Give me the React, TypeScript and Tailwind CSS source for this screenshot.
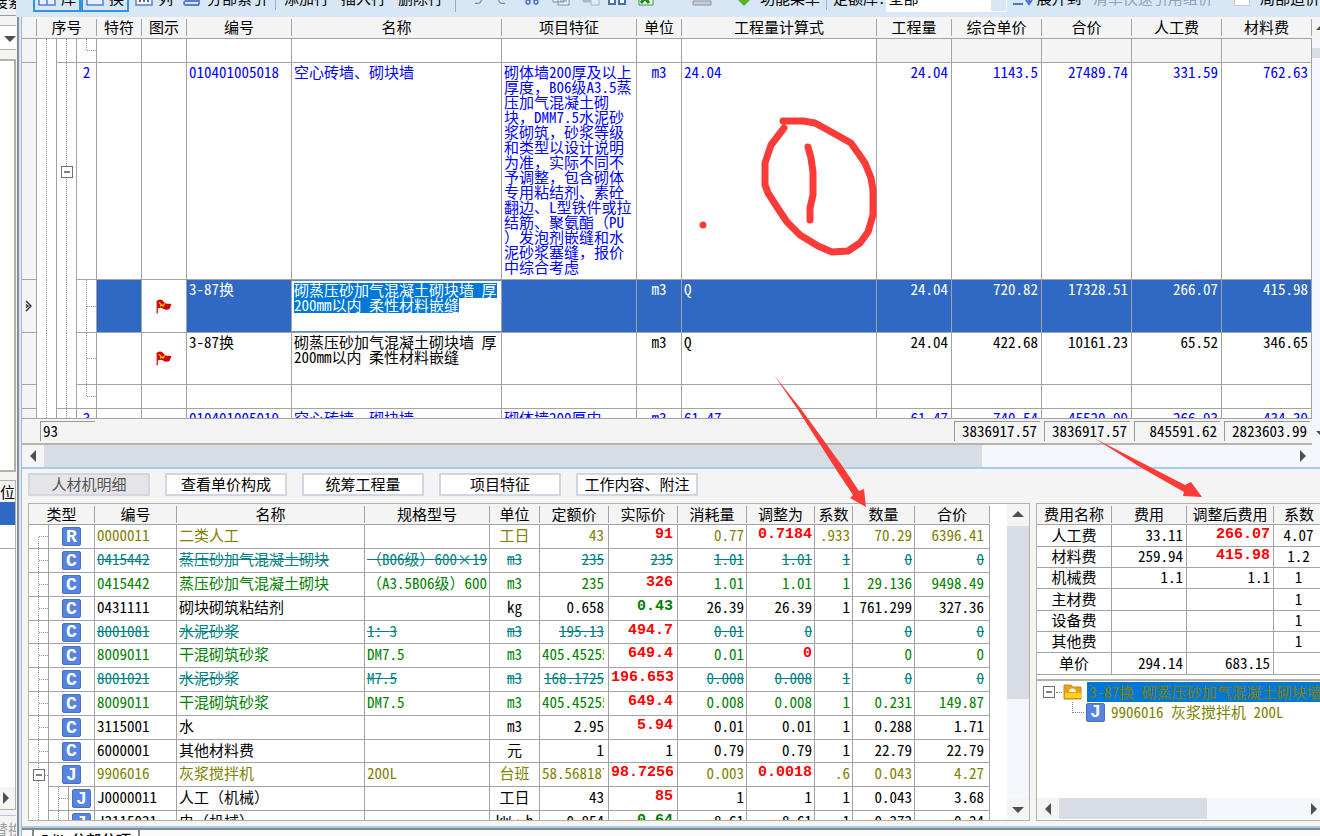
import type { ReactNode } from "react";
import clsx from "clsx";
import { Redo2, Scissors, Undo2 } from "lucide-react";

const DOTS_V =
  "[background-image:repeating-linear-gradient(#909090_0_1px,#fff_1px_2px)] [background-size:1px_100%] [background-position:50%_0] bg-no-repeat";
const DOTS_BRANCH =
  "[background-image:repeating-linear-gradient(#909090_0_1px,#fff_1px_2px),repeating-linear-gradient(90deg,#909090_0_1px,#fff_1px_2px)] [background-size:1px_100%,9px_1px] [background-position:50%_0,100%_50%] bg-no-repeat";
const DOTS_FIRST =
  "[background-image:repeating-linear-gradient(#909090_0_1px,#fff_1px_2px),repeating-linear-gradient(90deg,#909090_0_1px,#fff_1px_2px)] [background-size:1px_50%,9px_1px] [background-position:50%_100%,100%_50%] bg-no-repeat";
const DOTS_LAST =
  "[background-image:repeating-linear-gradient(#909090_0_1px,#fff_1px_2px),repeating-linear-gradient(90deg,#909090_0_1px,#fff_1px_2px)] [background-size:1px_50%,9px_1px] [background-position:50%_0,100%_50%] bg-no-repeat";

const LINE = "border-[#a3a3a3]";
const CHANGED = "font-['Liberation_Mono',monospace] text-[15px] font-bold";

type Tone = "olive" | "teal" | "green" | "black";

const TONES: Record<Tone, string> = {
  olive: "text-[#808000]",
  teal: "text-[#008080] line-through",
  green: "text-[#008000]",
  black: "text-black",
};

type Resource = {
  kind: "R" | "C" | "J";
  tone: Tone;
  child?: boolean;
  code: string;
  name: string;
  spec?: string;
  unit: string;
  base: string;
  actual: string;
  actualTone?: "red" | "green";
  usage: string;
  adjusted: string;
  adjustedTone?: "red";
  factor?: string;
  qty: string;
  total: string;
};

const RESOURCES: Resource[] = [
  { kind: "R", tone: "olive", code: "0000011", name: "二类人工", unit: "工日", base: "43", actual: "91", actualTone: "red", usage: "0.77", adjusted: "0.7184", adjustedTone: "red", factor: ".933", qty: "70.29", total: "6396.41" },
  { kind: "C", tone: "teal", code: "0415442", name: "蒸压砂加气混凝土砌块", spec: "（B06级）600×19", unit: "m3", base: "235", actual: "235", usage: "1.01", adjusted: "1.01", factor: "1", qty: "0", total: "0" },
  { kind: "C", tone: "green", code: "0415442", name: "蒸压砂加气混凝土砌块", spec: "（A3.5B06级）600", unit: "m3", base: "235", actual: "326", actualTone: "red", usage: "1.01", adjusted: "1.01", factor: "1", qty: "29.136", total: "9498.49" },
  { kind: "C", tone: "black", code: "0431111", name: "砌块砌筑粘结剂", unit: "kg", base: "0.658", actual: "0.43", actualTone: "green", usage: "26.39", adjusted: "26.39", factor: "1", qty: "761.299", total: "327.36" },
  { kind: "C", tone: "teal", code: "8001081", name: "水泥砂浆", spec: "1：3", unit: "m3", base: "195.13", actual: "494.7", actualTone: "red", usage: "0.01", adjusted: "0", qty: "0", total: "0" },
  { kind: "C", tone: "green", code: "8009011", name: "干混砌筑砂浆", spec: "DM7.5", unit: "m3", base: "405.452555", actual: "649.4", actualTone: "red", usage: "0.01", adjusted: "0", adjustedTone: "red", qty: "0", total: "0" },
  { kind: "C", tone: "teal", code: "8001021", name: "水泥砂浆", spec: "M7.5", unit: "m3", base: "168.1725", actual: "196.6538", actualTone: "red", usage: "0.008", adjusted: "0.008", factor: "1", qty: "0", total: "0" },
  { kind: "C", tone: "green", code: "8009011", name: "干混砌筑砂浆", spec: "DM7.5", unit: "m3", base: "405.452555", actual: "649.4", actualTone: "red", usage: "0.008", adjusted: "0.008", factor: "1", qty: "0.231", total: "149.87" },
  { kind: "C", tone: "black", code: "3115001", name: "水", unit: "m3", base: "2.95", actual: "5.94", actualTone: "red", usage: "0.01", adjusted: "0.01", factor: "1", qty: "0.288", total: "1.71" },
  { kind: "C", tone: "black", code: "6000001", name: "其他材料费", unit: "元", base: "1", actual: "1", usage: "0.79", adjusted: "0.79", factor: "1", qty: "22.79", total: "22.79" },
  { kind: "J", tone: "olive", code: "9906016", name: "灰浆搅拌机", spec: "200L", unit: "台班", base: "58.568187", actual: "98.72564", actualTone: "red", usage: "0.003", adjusted: "0.0018", adjustedTone: "red", factor: ".6", qty: "0.043", total: "4.27" },
  { kind: "J", tone: "black", child: true, code: "J0000011", name: "人工（机械）", unit: "工日", base: "43", actual: "85", actualTone: "red", usage: "1", adjusted: "1", factor: "1", qty: "0.043", total: "3.68" },
  { kind: "J", tone: "black", child: true, code: "J3115031", name: "电（机械）", unit: "kW·h", base: "0.854", actual: "0.64", actualTone: "green", usage: "8.61", adjusted: "8.61", factor: "1", qty: "0.373", total: "0.24" },
];

const FEES = [
  { name: "人工费", fee: "33.11", adjusted: "266.07", changed: true, factor: "4.07" },
  { name: "材料费", fee: "259.94", adjusted: "415.98", changed: true, factor: "1.2" },
  { name: "机械费", fee: "1.1", adjusted: "1.1", factor: "1" },
  { name: "主材费", fee: "", adjusted: "", factor: "1" },
  { name: "设备费", fee: "", adjusted: "", factor: "1" },
  { name: "其他费", fee: "", adjusted: "", factor: "1" },
  { name: "单价", fee: "294.14", adjusted: "683.15", factor: "" },
];

const FEATURE_LINES = [
  "砌体墙200厚及以上",
  "厚度，B06级A3.5蒸",
  "压加气混凝土砌",
  "块，DMM7.5水泥砂",
  "浆砌筑，砂浆等级",
  "和类型以设计说明",
  "为准，实际不同不",
  "予调整，包含砌体",
  "专用粘结剂、素砼",
  "翻边、L型铁件或拉",
  "结筋、聚氨酯（PU",
  "）发泡剂嵌缝和水",
  "泥砂浆塞缝，报价",
  "中综合考虑",
];

const QUOTA_NAME = "砌蒸压砂加气混凝土砌块墙 厚\n200mm以内 柔性材料嵌缝";

// Latin runs use the half-width forms; full-width punctuation has to keep its own width.
function Mixed({ text = "" }: { text?: string }) {
  return text.split(/([，（）：×])/).map((part, i) =>
    i % 2 ? (
      <span key={i} className="[font-feature-settings:normal]">
        {part}
      </span>
    ) : (
      part
    ),
  );
}

function Triangle({ dir }: { dir: "up" | "down" | "left" | "right" }) {
  const points = {
    up: "0,8 6,2 12,8",
    down: "0,4 12,4 6,10",
    left: "9,0 3,6 9,12",
    right: "3,0 9,6 3,12",
  }[dir];
  return (
    <svg viewBox="0 0 12 12" className="block h-3 w-3 shrink-0" fill="#505050">
      <polygon points={points} />
    </svg>
  );
}

function Collapse() {
  return (
    <svg viewBox="0 0 12 12" className="mx-auto block h-3 w-3">
      <rect x="0.5" y="0.5" width="11" height="11" fill="#fff" stroke="#707070" />
      <path d="M3 6h6" stroke="#000" />
    </svg>
  );
}

function Flag() {
  return (
    <svg viewBox="0 0 16 15" className="mx-auto block h-[15px] w-4">
      <path d="M1.2 1.5v13" stroke="#c00" strokeWidth="1.2" />
      <path d="M1.5 1.5C4-.2 6 .5 7.500 2.500S11 5 13 4.800L15.500 5 13.500 10C10.500 11.500 8.500 10.500 7 9.500S3.500 8.500 1.500 9.500z" fill="#d40000" />
      <path d="M3 3.500l4 3.500 2-3M5.500 5.500L4 7.500" stroke="#ffd800" strokeWidth="1.2" fill="none" />
    </svg>
  );
}

function KindBadge({ kind }: { kind: string }) {
  return (
    <span className="flex h-[19px] w-[19px] items-center justify-center rounded-[2px] border border-[#4a6fc0] bg-[#5585e0] font-['Liberation_Mono',monospace] text-[18px] leading-[18px] font-bold text-white">
      {kind}
    </span>
  );
}

function HeadCell({ children, colSpan, last }: { children?: ReactNode; colSpan?: number; last?: boolean }) {
  return (
    <th colSpan={colSpan} className={clsx("border-b bg-[#f4f4f4] p-0 font-normal whitespace-nowrap", LINE)}>
      <div className={clsx("h-[17px] text-center leading-4", !last && "border-r border-[#a3a3a3]")}>{children}</div>
    </th>
  );
}

function Toolbar() {
  return (
    <div className="flex h-[17px] items-end overflow-hidden bg-[#d7e7f5] pl-[11px] whitespace-nowrap">
      <div className="flex h-7 w-full shrink-0 items-center pb-[10px] leading-5">
        <button className="flex h-7 w-12 shrink-0 items-center gap-[5px] border-2 border-[#3393df] pl-[3px]">
          <svg viewBox="0 0 18 16" className="h-4 w-[18px]" fill="#e8f0fb" stroke="#5580d0" strokeWidth="1.500">
            <path d="M1 1h16v14H1zM9 1v14" />
          </svg>
          库
        </button>
        <button className="flex h-7 w-12 shrink-0 items-center gap-[5px] border-2 border-[#3393df] pl-[3px]">
          <svg viewBox="0 0 18 16" className="h-4 w-[18px]" fill="#e8f0fb" stroke="#5580d0" strokeWidth="1.500">
            <path d="M1 1h16v14H1zM1 9h16" />
          </svg>
          换
        </button>
        <button className="ml-[6px] flex shrink-0 items-center gap-[5px]">
          <svg viewBox="0 0 18 16" className="h-4 w-[18px]">
            <path d="M1 1h16v14H1z" fill="#fff" stroke="#5580d0" strokeWidth="1.500" />
            <path d="M5 7v6" stroke="#e03030" strokeWidth="2" strokeDasharray="2 1" />
            <path d="M9 7v6M13 7v6" stroke="#3070d0" strokeWidth="2" strokeDasharray="2 1" />
          </svg>
          列
        </button>
        <button className="ml-[10px] flex shrink-0 items-center gap-[6px]">
          <svg viewBox="0 0 18 16" className="h-4 w-[18px]" fill="none" stroke="#5580d0" strokeWidth="1.800">
            <path d="M2 1h14v10H3a2 2 0 0 0 0 4h13M16 11v4" />
          </svg>
          分部索引
        </button>
        <span className="mx-2 h-6 w-px shrink-0 bg-[#8fb6dc]" />
        <button className="shrink-0">添加行</button>
        <button className="ml-3 shrink-0">插入行</button>
        <button className="ml-3 shrink-0">删除行</button>
        <span className="mx-3 h-7 w-px shrink-0 bg-[#a0a8b0]" />
        <button aria-label="撤销" className="shrink-0"><Undo2 className="h-4 w-4 text-[#8090a8]" /></button>
        <button aria-label="恢复" className="ml-3 shrink-0"><Redo2 className="h-4 w-4 text-[#8090a8]" /></button>
        <button aria-label="剪切" className="ml-3 shrink-0"><Scissors className="h-4 w-4 -rotate-90 text-[#4a6cb8]" /></button>
        <button aria-label="复制" className="ml-3 shrink-0">
          <svg viewBox="0 0 18 16" className="h-4 w-[18px]" fill="#e8f0fb" stroke="#8090b0">
            <path d="M1 0h11v12H1zM6 4h11v11H6zM8 8h7M8 11h7" />
          </svg>
        </button>
        <button aria-label="粘贴" className="ml-3 shrink-0">
          <svg viewBox="0 0 18 16" className="h-4 w-[18px]" fill="#a9b8c8" stroke="#a9b8c8">
            <path d="M1 0h8v12H1z" />
            <path d="M9 6h8v9H9z" fill="#e5edf5" />
          </svg>
        </button>
        <button aria-label="查找" className="ml-2 shrink-0">
          <svg viewBox="0 0 18 16" className="h-4 w-[18px]" fill="#fff" stroke="#4a6cb8" strokeWidth="2">
            <path d="M1 5h6v9H1zM11 5h6v9h-6z" />
          </svg>
        </button>
        <button aria-label="导出表格" className="ml-3 shrink-0">
          <svg viewBox="0 0 18 16" className="h-4 w-[18px]">
            <path d="M1 0h14v15H1z" fill="#e9f6e9" stroke="#3e9a3e" />
            <path d="M3 3l8 10M11 3L3 13" stroke="#1f8a2f" strokeWidth="3" />
          </svg>
        </button>
        <button aria-label="标尺" className="ml-9 shrink-0">
          <svg viewBox="0 0 20 16" className="h-4 w-5">
            <path d="M1 11h18v4H1z" fill="#c8ccd4" stroke="#8d939e" />
            <path d="M4 9l5-6 4 5 4-2" stroke="#4a6cb8" strokeWidth="1.500" fill="none" />
          </svg>
        </button>
        <svg viewBox="0 0 16 16" className="ml-6 h-4 w-4 shrink-0" fill="#55b52d">
          <path d="M8 0l8 8-8 8-8-8z" />
        </svg>
        <button className="ml-2 shrink-0">功能菜单</button>
        <span className="mx-[6px] h-6 w-px shrink-0 bg-[#8fb6dc]" />
        <label htmlFor="library" className="shrink-0">定额库:</label>
        <select id="library" defaultValue="all" className="h-7 w-[105px] shrink-0 appearance-none bg-white pl-[3px]">
          <option value="all">全部</option>
        </select>
        <span className="h-7 w-4 shrink-0 border-r border-b border-white bg-[#d7e7f5]" />
        <svg viewBox="0 0 20 16" className="ml-[6px] h-4 w-5 shrink-0" stroke="#4a78c8" strokeWidth="2" fill="none">
          <path d="M0 4h10M0 9h10M0 14h10M16 2v11M13 10l3 4 3-4" />
        </svg>
        <button className="ml-1 shrink-0">展开到</button>
        <button className="ml-[11px] shrink-0 text-[#8ba4bd]">清单快速引用组价</button>
        <label className="ml-auto flex shrink-0 items-center gap-[10px]">
          <input type="checkbox" className="h-4 w-4 appearance-none border border-[#c5ccd4] bg-white" />
          局部造价
        </label>
      </div>
    </div>
  );
}

function NameEditor() {
  return (
    <textarea
      aria-label="名称"
      defaultValue={QUOTA_NAME}
      className="block h-[50px] w-full resize-none overflow-hidden bg-white [background-image:linear-gradient(#0078d7,#0078d7),linear-gradient(#0078d7,#0078d7)] [background-position:2px_2px,2px_17px] [background-size:203px_15px,165px_15px] bg-no-repeat pt-px pl-[2px] leading-[15px] whitespace-pre text-white outline-none"
    />
  );
}

function BillCells({ values, className }: { values: string[]; className?: string }) {
  return (
    <>
      {values.map((value, i) => (
        <td key={i} className={clsx("border-r border-b px-[3px] pt-px text-right align-top", LINE, className)}>
          {value}
        </td>
      ))}
    </>
  );
}

function BillTable() {
  const cell = clsx("border-r border-b px-[2px] pt-px align-top", LINE);
  const iconCell = clsx("border-r border-b p-0 align-middle", LINE);
  const gutter = clsx("border-r border-b bg-[#f4f4f4] p-0", LINE);
  const guide = clsx("border-r p-0", LINE);
  return (
    <table className="w-full table-fixed border-separate border-spacing-0 bg-white leading-[15px]">
      <colgroup>
        <col className="w-[15px]" />
        <col className="w-5" />
        <col className="w-5" />
        <col className="w-5" />
        <col className="w-[45px]" />
        <col className="w-[45px]" />
        <col className="w-[105px]" />
        <col className="w-[210px]" />
        <col className="w-[135px]" />
        <col className="w-[45px]" />
        <col />
        <col className="w-[75px]" />
        <col className="w-[90px]" />
        <col className="w-[90px]" />
        <col className="w-[90px]" />
        <col className="w-[90px]" />
      </colgroup>
      <thead>
        <tr className="h-[22px]">
          <HeadCell />
          <HeadCell colSpan={3}>序号</HeadCell>
          <HeadCell>特符</HeadCell>
          <HeadCell>图示</HeadCell>
          <HeadCell>编号</HeadCell>
          <HeadCell>名称</HeadCell>
          <HeadCell>项目特征</HeadCell>
          <HeadCell>单位</HeadCell>
          <HeadCell>工程量计算式</HeadCell>
          <HeadCell>工程量</HeadCell>
          <HeadCell>综合单价</HeadCell>
          <HeadCell>合价</HeadCell>
          <HeadCell>人工费</HeadCell>
          <HeadCell>材料费</HeadCell>
        </tr>
      </thead>
      <tbody>
        <tr className="h-6">
          <td className={gutter} />
          <td className={clsx(guide, DOTS_V)} />
          <td className={clsx(guide, "border-b", DOTS_V)} />
          <td className={clsx(guide, "border-b", DOTS_LAST)} />
          <td className={cell} /><td className={cell} /><td className={cell} /><td className={cell} />
          <td className={cell} /><td className={cell} /><td className={cell} />
          <BillCells values={["", "", "", "", ""]} className="bg-[#f4f4f4]" />
        </tr>
        <tr className="h-[217px] text-[#0000ff]">
          <td className={gutter} />
          <td className={clsx(guide, DOTS_V)} />
          <td className={clsx(guide, "align-middle", DOTS_V)}><Collapse /></td>
          <td className={clsx(cell, "text-center")}>2</td>
          <td className={cell} />
          <td className={cell} />
          <td className={cell}>010401005018</td>
          <td className={cell}>空心砖墙、砌块墙</td>
          <td className={clsx(cell, "whitespace-nowrap")}>
            {FEATURE_LINES.map((line) => (
              <div key={line}><Mixed text={line} /></div>
            ))}
          </td>
          <td className={clsx(cell, "text-center")}>m3</td>
          <td className={cell}>24.04</td>
          <BillCells values={["24.04", "1143.5", "27489.74", "331.59", "762.63"]} />
        </tr>
        <tr className="h-[53px] text-white">
          <td className={clsx(gutter, "align-middle")}>
            <svg viewBox="0 0 8 12" className="mx-auto block h-3 w-2" fill="none" stroke="#222" strokeWidth="1.300">
              <path d="M1 1l5 5-5 5M1 4.500L3 6 1 7.500" />
            </svg>
          </td>
          <td className={clsx(guide, DOTS_V)} />
          <td className={clsx(guide, DOTS_V)} />
          <td className={clsx(guide, "border-b", DOTS_BRANCH)} />
          <td className={clsx(cell, "bg-[#3069c3]")} />
          <td className={iconCell}><Flag /></td>
          <td className={clsx(cell, "bg-[#3069c3]")}>3-87换</td>
          <td className={clsx(iconCell, "bg-[#5a87d0]")}><NameEditor /></td>
          <td className={clsx(cell, "bg-[#3069c3]")} />
          <td className={clsx(cell, "bg-[#3069c3] text-center")}>m3</td>
          <td className={clsx(cell, "bg-[#3069c3]")}>Q</td>
          <BillCells values={["24.04", "720.82", "17328.51", "266.07", "415.98"]} className="bg-[#3069c3]" />
        </tr>
        <tr className="h-[52px]">
          <td className={gutter} />
          <td className={clsx(guide, DOTS_V)} />
          <td className={clsx(guide, DOTS_V)} />
          <td className={clsx(guide, "border-b", DOTS_BRANCH)} />
          <td className={cell} />
          <td className={iconCell}><Flag /></td>
          <td className={cell}>3-87换</td>
          <td className={clsx(cell, "whitespace-pre")}>{QUOTA_NAME}</td>
          <td className={cell} />
          <td className={clsx(cell, "text-center")}>m3</td>
          <td className={cell}>Q</td>
          <BillCells values={["24.04", "422.68", "10161.23", "65.52", "346.65"]} />
        </tr>
        <tr className="h-6">
          <td className={gutter} />
          <td className={clsx(guide, DOTS_V)} />
          <td className={clsx(guide, "border-b", DOTS_V)} />
          <td className={clsx(guide, "border-b", DOTS_LAST)} />
          <td className={cell} /><td className={cell} /><td className={cell} /><td className={cell} />
          <td className={cell} /><td className={cell} /><td className={cell} />
          <BillCells values={["", "", "", "", ""]} />
        </tr>
        <tr className="h-6 text-[#0000ff]">
          <td className={gutter} />
          <td className={clsx(guide, DOTS_V)} />
          <td className={clsx(guide, DOTS_V)} />
          <td className={clsx(cell, "text-center")}>3</td>
          <td className={cell} />
          <td className={cell} />
          <td className={cell}>010401005019</td>
          <td className={cell}>空心砖墙、砌块墙</td>
          <td className={cell}>砌体墙200厚内</td>
          <td className={clsx(cell, "text-center")}>m3</td>
          <td className={cell}>61.47</td>
          <BillCells values={["61.47", "740.54", "45520.99", "266.93", "434.39"]} />
        </tr>
      </tbody>
    </table>
  );
}

function ResourceTable() {
  const cell = clsx("overflow-hidden border-r border-b px-[2px] pt-0 pb-[3px] whitespace-nowrap", LINE);
  return (
    <table className="w-full table-fixed border-separate border-spacing-0 leading-[18px]">
      <colgroup>
        <col className="w-5" />
        <col className="w-5" />
        <col className="w-[26px]" />
        <col className="w-[82px]" />
        <col />
        <col className="w-[125px]" />
        <col className="w-[50px]" />
        <col className="w-[69px]" />
        <col className="w-[69px]" />
        <col className="w-[69px]" />
        <col className="w-[68px]" />
        <col className="w-[38px]" />
        <col className="w-[62px]" />
        <col className="w-[75px]" />
      </colgroup>
      <thead>
        <tr className="h-[21px]">
          <HeadCell colSpan={3}>类型</HeadCell>
          <HeadCell>编号</HeadCell>
          <HeadCell>名称</HeadCell>
          <HeadCell>规格型号</HeadCell>
          <HeadCell>单位</HeadCell>
          <HeadCell>定额价</HeadCell>
          <HeadCell>实际价</HeadCell>
          <HeadCell>消耗量</HeadCell>
          <HeadCell>调整为</HeadCell>
          <HeadCell>系数</HeadCell>
          <HeadCell>数量</HeadCell>
          <HeadCell>合价</HeadCell>
        </tr>
      </thead>
      <tbody>
        {RESOURCES.map((r, i) => {
          const tone = TONES[r.tone];
          const isParent = r.code === "9906016";
          return (
            <tr key={i} className="h-6 nth-[5n]:h-[23px]">
              <td
                className={clsx(
                  "border-r p-0",
                  LINE,
                  !r.child && !isParent && "border-b",
                  i === 0 ? DOTS_FIRST : r.child ? DOTS_V : DOTS_BRANCH,
                )}
              >
                {isParent && <Collapse />}
              </td>
              {r.child && <td className={clsx("border-r border-b p-0", LINE, DOTS_BRANCH)} />}
              <td colSpan={r.child ? 1 : 2} className={clsx("border-r border-b p-0", LINE, r.child ? "pl-[3px]" : "pl-[13px]")}>
                <KindBadge kind={r.kind} />
              </td>
              <td className={clsx(cell, tone)}>{r.code}</td>
              <td className={clsx(cell, tone)}><Mixed text={r.name} /></td>
              <td className={clsx(cell, tone)}><Mixed text={r.spec} /></td>
              <td className={clsx(cell, "text-center", tone)}>{r.unit}</td>
              <td className={clsx(cell, tone)}>
                <div className="mr-[2px] overflow-hidden text-right">{r.base}</div>
              </td>
              <td className={clsx(cell, !r.actualTone && tone)}>
                <div
                  className={clsx(
                    "mr-[2px] overflow-hidden text-right",
                    r.actualTone && CHANGED,
                    r.actualTone === "red" && "text-[#ff0000]",
                    r.actualTone === "green" && "text-[#008000]",
                  )}
                >
                  {r.actual}
                </div>
              </td>
              <td className={clsx(cell, "text-right", tone)}>{r.usage}</td>
              <td className={clsx(cell, "text-right", r.adjustedTone ? [CHANGED, "text-[#ff0000]"] : tone)}>
                {r.adjusted}
              </td>
              <td className={clsx(cell, "text-right", tone)}>{r.factor}</td>
              <td className={clsx(cell, "text-right", tone)}>{r.qty}</td>
              <td className={clsx(cell, "text-right", tone)}>
                <span className="mr-[3px]">{r.total}</span>
              </td>
            </tr>
          );
        })}
      </tbody>
    </table>
  );
}

function FeeTable() {
  const cell = clsx("border-r border-b px-[3px] pt-0 pb-[2px]", LINE);
  return (
    <table className="w-[287px] shrink-0 table-fixed border-separate border-spacing-0 leading-[18px]">
      <colgroup>
        <col className="w-[75px]" />
        <col className="w-[75px]" />
        <col className="w-[87px]" />
        <col className="w-[50px]" />
      </colgroup>
      <thead>
        <tr className="h-[21px]">
          <HeadCell>费用名称</HeadCell>
          <HeadCell>费用</HeadCell>
          <HeadCell>调整后费用</HeadCell>
          <HeadCell last>系数</HeadCell>
        </tr>
      </thead>
      <tbody>
        {FEES.map((row) => (
          <tr key={row.name} className="h-[21px] nth-[3n+1]:h-[22px]">
            <td className={clsx(cell, "text-center")}>{row.name}</td>
            <td className={clsx(cell, "text-right")}>{row.fee}</td>
            <td className={clsx(cell, "text-right", row.changed && [CHANGED, "text-[#ff0000]"])}>{row.adjusted}</td>
            <td className={clsx(cell, "text-center")}>{row.factor}</td>
          </tr>
        ))}
      </tbody>
    </table>
  );
}

function LeftStrip() {
  return (
    <aside className="flex w-4 shrink-0 flex-col overflow-hidden bg-[#f4f4f4] whitespace-nowrap">
      <div className="flex h-4 shrink-0 items-end justify-center border-b border-[#9a9a9a] bg-[#eef3f8]">
        <span className="h-6 leading-5">搜索</span>
      </div>
      <div className="mt-[9px] flex h-[25px] shrink-0 items-center border-y border-[#b5b2a4] bg-white pl-1">
        <Triangle dir="down" />
      </div>
      <div className="mt-[9px] h-[413px] shrink-0 border-2 border-l-0 border-[#b5b2a4] bg-white" />
      <div className="mt-2 flex h-[90px] shrink-0 flex-col border-t border-r border-[#b5b2a4] bg-white">
        <div className="h-[21px] bg-[#f4f4f4] leading-[21px]">位</div>
        <div className="h-[23px] bg-[#3069c3]" />
        <div className="h-6 border-b border-[#a3a3a3]" />
      </div>
      <div className="flex min-h-[218px] flex-1 flex-col border-r border-b border-[#b5b2a4] bg-white">
        <div className="mt-auto flex h-[22px] items-center bg-[#f4f4f4]">
          <Triangle dir="right" />
        </div>
      </div>
      <div className="mt-[5px] flex h-[21px] shrink-0 justify-center border-t border-[#b8c4dc] pt-1 leading-[18px] text-[#a0a0a0]">替换</div>
    </aside>
  );
}

function Annotations() {
  return (
    <svg
      viewBox="0 0 1320 836"
      className="pointer-events-none absolute top-0 left-0 h-[836px] w-[1320px]"
      fill="none"
      stroke="#fb3b38"
      strokeWidth="7"
      strokeLinecap="round"
      strokeLinejoin="round"
    >
      <path d="M783 121L803 121 815 123 835 134 851 143 865 163 871 178 873 190 873 215 868 232 860 243 848 251 832 252 818 246 800 235 787 222 777 207 768 193 765 185 765 163 771 145 784 128" />
      <path d="M808 147L811 158 813 172 813 195 810 208 810 220" />
      <g fill="#fb3b38" stroke="none">
        <circle cx="703" cy="225" r="3.500" />
        <polygon points="774,375 801,409 843,467 859,491 864,489 866,507 850,498 853,495 837,471 798,410" />
        <polygon points="1094,438 1185,485 1191,482 1202,497 1183,496 1184,492 1140,467" />
      </g>
    </svg>
  );
}

const TABS = ["人材机明细", "查看单价构成", "统筹工程量", "项目特征", "工作内容、附注"];

export default function App() {
  return (
    <div className="relative flex min-h-screen w-full overflow-hidden bg-[#f4f4f4] font-['Noto_Sans_CJK_SC',sans-serif] text-[15px] leading-[15px] text-black [font-feature-settings:'hwid']">
      <LeftStrip />
      <div className="flex w-[6px] shrink-0 flex-col">
        <div className="h-[17px] bg-[#d7e7f5]" />
        <div className="ml-px flex-1 border-r border-l-2 border-r-[#8ec0ea] border-l-[#8a8d92] bg-[#dfe6ee]" />
      </div>
      <div className="flex min-w-0 flex-1 flex-col">
        <Toolbar />
        <section className="flex">
          <div className="min-w-0 flex-1">
            <div className="h-[402px] overflow-hidden border-b border-[#a3a3a3]">
              <BillTable />
            </div>
            <div className="flex h-[26px] items-center gap-1 border-b-2 border-[#b5b5b0] pr-[2px] pl-[18px]">
              <div className="h-5 w-[55px] border-t border-l border-[#999] pl-[2px] leading-[18px]">93</div>
              <span className="flex-1" />
              {["3836917.57", "3836917.57", "845591.62", "2823603.99"].map((sum, i) => (
                <div key={i} className="h-5 w-[86px] border-t border-l border-[#999] pr-[3px] text-right leading-[18px]">
                  {sum}
                </div>
              ))}
            </div>
            <div className="flex h-[22px] items-center bg-[#f5f6fb]">
              <div className="flex h-full w-[22px] items-center justify-center bg-[#f4f4f4]"><Triangle dir="left" /></div>
              <div className="h-full w-[938px] min-w-0 bg-[#d8dce5]" />
              <div className="mr-[3px] ml-auto"><Triangle dir="right" /></div>
            </div>
          </div>
          <div className="flex w-2 shrink-0 flex-col overflow-hidden bg-[#f5f6fb]">
            <div className="h-[22px] bg-[#f4f4f4] pt-[5px] pl-1"><Triangle dir="up" /></div>
            <div className="mt-[9px] h-[10px] bg-[#d8dce5]" />
            <div className="mt-auto mb-7 pl-1"><Triangle dir="down" /></div>
          </div>
        </section>

        <section className="flex flex-1 flex-col border-t-2 border-b-2 border-t-[#a5cdea] border-b-[#a5cdea] pt-1 pl-[6px]">
          <div className="flex gap-[15px]">
            {TABS.map((tab, i) => (
              <button
                key={tab}
                className={clsx(
                  "h-[23px] w-[122px] border-2 border-[#d2d6e2] pb-px leading-[18px] whitespace-nowrap",
                  i === 0 ? "bg-[#e5e5e7] text-[#555]" : "bg-white",
                )}
              >
                {tab}
              </button>
            ))}
          </div>
          <div className="mt-[7px] mb-[5px] flex h-[318px] gap-[6px]">
            <div className="flex min-w-0 flex-1 overflow-hidden border border-[#b5b2a4] bg-white">
              <div className="min-w-0 flex-1">
                <ResourceTable />
              </div>
              <div className="ml-[17px] flex w-[22px] shrink-0 flex-col items-center bg-[#f5f6fb]">
                <div className="flex h-[22px] w-full items-center justify-center bg-[#f4f4f4]"><Triangle dir="up" /></div>
                <div className="h-[173px] w-full bg-[#d8dce5]" />
                <div className="mt-auto flex h-[22px] w-full items-center justify-center bg-[#f4f4f4]"><Triangle dir="down" /></div>
              </div>
            </div>
            <div className="flex w-[284px] shrink-0 flex-col overflow-hidden border border-r-0 border-[#b5b2a4] bg-white">
              <FeeTable />
              <div className="mt-1 border-t-2 border-[#b5b2a4] pt-px pl-[6px] leading-5">
                <div className="flex items-center whitespace-nowrap">
                  <span className="w-3 shrink-0"><Collapse /></span>
                  <span className="mx-px w-[6px] shrink-0 border-t border-dotted border-[#808080]" />
                  <svg viewBox="0 0 20 16" className="mr-1 h-4 w-5 shrink-0">
                    <path d="M1 1h7l2 2h8v12H1z" fill="#e8a11c" stroke="#c98a14" />
                    <path d="M6 8a3.500 3.500 0 0 1 7 0z" fill="#fff6dc" />
                    <path d="M2 9h16v5H2z" fill="#fbd31b" />
                  </svg>
                  <span className="bg-[#0078d7] pl-[2px] text-[#808000]">3-87换 砌蒸压砂加气混凝土砌块墙</span>
                </div>
                <div className="flex items-center whitespace-nowrap text-[#808000]">
                  <span className="mr-[2px] mb-[9px] ml-[29px] h-[11px] w-3 shrink-0 border-b border-l border-dotted border-[#808080]" />
                  <KindBadge kind="J" />
                  <span className="ml-[6px]">9906016 灰浆搅拌机 200L</span>
                </div>
              </div>
              <div className="mt-auto mb-px flex h-[21px] shrink-0 items-center bg-[#f5f6fb]">
                <div className="flex h-full w-[22px] items-center justify-center bg-[#f4f4f4]"><Triangle dir="left" /></div>
                <div className="h-full w-[148px] bg-[#d8dce5]" />
                <div className="ml-auto"><Triangle dir="right" /></div>
              </div>
            </div>
          </div>
        </section>

        <div className="flex h-2 items-start overflow-hidden border-t-2 border-[#85888d] bg-[#fafafa] pl-[10px]">
          <button className="h-5 w-[108px] border-x-2 border-[#85888d] bg-white text-center leading-5 font-medium whitespace-nowrap">
            E/U 分部分项
          </button>
        </div>
      </div>
      <Annotations />
    </div>
  );
}
